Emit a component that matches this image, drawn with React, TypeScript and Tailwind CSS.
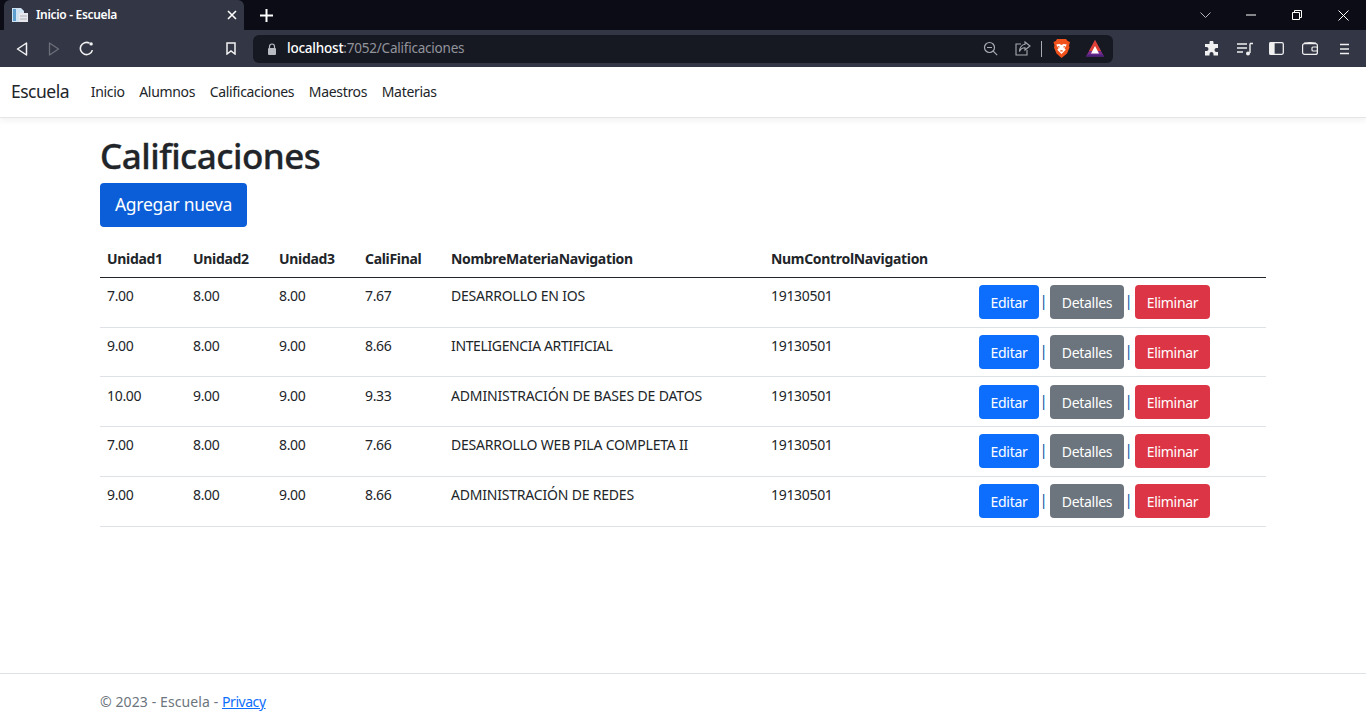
import React from "react";

const F = "font-['Noto_Sans',sans-serif]";

const rows = [
  { h: "h-[50px]", pad: "pt-[7px]", t: "tracking-[-0.2px]", c: ["7.00", "8.00", "8.00", "7.67"], n: "DESARROLLO EN IOS" },
  { h: "h-[49px]", pad: "pt-[7px]", t: "tracking-[-0.37px]", c: ["9.00", "8.00", "9.00", "8.66"], n: "INTELIGENCIA ARTIFICIAL" },
  { h: "h-[50px]", pad: "pt-[8px]", t: "tracking-[-0.15px]", c: ["10.00", "9.00", "9.00", "9.33"], n: "ADMINISTRACIÓN DE BASES DE DATOS" },
  { h: "h-[50px]", pad: "pt-[7px]", t: "tracking-[-0.2px]", c: ["7.00", "8.00", "8.00", "7.66"], n: "DESARROLLO WEB PILA COMPLETA II" },
  { h: "h-[50px]", pad: "pt-[7px]", t: "tracking-[-0.2px]", c: ["9.00", "8.00", "9.00", "8.66"], n: "ADMINISTRACIÓN DE REDES" },
];

function TabBar() {
  return (
    <div className="flex h-[30px] bg-[#0b0c15] text-white">
      <div className="ml-1 flex h-[30px] w-[240px] items-center rounded-t-md bg-[#333645] pl-2 pr-2">
        <svg width="16" height="16" viewBox="0 0 16 16" className="shrink-0">
          <path d="M0 1h9l3 3v11H0z" fill="#cfe3f3" />
          <path d="M1 2h3v12H1z" fill="#5f9fd0" />
          <path d="M7 6h9v9H7z" fill="#e8e8ec" />
          <path d="M8 9h7M8 12h7" stroke="#a9b0bb" />
        </svg>
        <span className="ml-[8px] flex-1 text-[12px] font-semibold leading-none tracking-[-0.32px]">Inicio - Escuela</span>
        <svg width="10" height="10" viewBox="0 0 10 10" stroke="#fff" strokeWidth="1.6" className="-mr-[1px]">
          <path d="M1 1l8 8M9 1l-8 8" />
        </svg>
      </div>
      <svg width="13" height="13" viewBox="0 0 13 13" stroke="#fff" strokeWidth="2" className="ml-[16px] mt-[9px]">
        <path d="M6.5 0v13M0 6.5h13" />
      </svg>
      <div className="ml-auto flex items-center text-[#e6e6e6]">
        <svg width="11" height="7" viewBox="0 0 11 7" fill="none" stroke="#b5b5bb" className="mr-[35px]">
          <path d="M.5.5l5 5 5-5" />
        </svg>
        <svg width="10" height="2" viewBox="0 0 10 2" className="mr-[36px]">
          <path d="M0 1h10" stroke="#fff" />
        </svg>
        <svg width="10" height="10" viewBox="0 0 10 10" fill="none" stroke="#fff" className="mr-[36px]">
          <path d="M.5 2.5h7v7h-7zM2.5 2.5v-2h7v7h-2" />
        </svg>
        <svg width="11" height="11" viewBox="0 0 11 11" stroke="#fff" className="mr-[17px]">
          <path d="M.5.5l10 10M10.5.5l-10 10" />
        </svg>
      </div>
    </div>
  );
}

function ToolBar() {
  return (
    <div className="flex h-[37px] items-center bg-[#333645]">
      <svg width="12" height="14" viewBox="0 0 12 14" fill="none" stroke="#f2f2f2" strokeWidth="1.5" className="ml-[16px]">
        <path d="M10.5 1L1.5 7l9 6z" strokeLinejoin="round" />
      </svg>
      <svg width="12" height="14" viewBox="0 0 12 14" fill="none" stroke="#6c6e7a" strokeWidth="1.3" className="ml-[20px]">
        <path d="M1.5 1l9 6-9 6z" strokeLinejoin="round" />
      </svg>
      <svg width="15" height="15" viewBox="0 0 14 14" fill="none" stroke="#f2f2f2" strokeWidth="1.5" className="ml-[19px]">
        <path d="M12.5 8.5A5.7 5.7 0 1 1 9.8 2" />
        <circle cx="11.3" cy="2.7" r="1.6" fill="#f2f2f2" stroke="none" />
      </svg>
      <svg width="10" height="13" viewBox="0 0 10 13" fill="none" stroke="#f2f2f2" strokeWidth="1.5" className="ml-[132px]">
        <path d="M1 1h8v11L5 9l-4 3z" />
      </svg>
      <div className="ml-[17px] flex h-[28px] w-[860px] items-center rounded-md bg-[#171922]">
        <svg width="10" height="12" viewBox="0 0 10 12" className="ml-[14px]">
          <path d="M2.5 5V3.5a2.5 2.5 0 0 1 5 0V5" fill="none" stroke="#b9bbc2" strokeWidth="1.2" />
          <rect x="1" y="5" width="8" height="7" rx="1" fill="#b9bbc2" />
        </svg>
        <span className={`ml-[10px] text-[13.5px] leading-none tracking-[-0.22px] ${F}`}>
          <span className="font-medium text-white">localhost</span>
          <span className="text-[#92949c]">:7052/Calificaciones</span>
        </span>
        <svg width="15" height="15" viewBox="0 0 15 15" fill="none" stroke="#a9abb2" strokeWidth="1.2" className="ml-auto mr-[1px]">
          <circle cx="6.5" cy="6.5" r="5" />
          <path d="M4 6.5h5M10.2 10.2l4 4" />
        </svg>
        <svg width="16" height="15" viewBox="0 0 16 15" fill="none" stroke="#a9abb2" strokeWidth="1.1" className="ml-[16px]">
          <path d="M6 3H1v11h11V9" />
          <path d="M10 1l5 4-5 4V6.800C7.500 6.800 5.500 8 4.500 10.500 4.500 6.500 7 3.500 10 3.300z" />
        </svg>
        <div className="ml-[10px] h-[16px] w-px bg-[#a9abb2]" />
        <svg width="17" height="19" viewBox="0 0 17 19" className="ml-[11px]">
          <path d="M4 0h9l1.700 2 2.300 1-1 3.500.5 2-2.500 6L8.500 19 3.500 14.500 1 8.500l.5-2L.5 3l2.300-1z" fill="#f1511b" />
          <path d="M3.200 5.500L6.500 5 8.500 5.900 10.500 5l3.300.5L11.500 9.500l1.300 1.200L9.500 14 8.500 15 7.500 14 4.200 10.700l1.300-1.200z" fill="#fff" />
          <path d="M6.500 8.300L5 7.500M10.500 8.300L12 7.500M7.300 11.800h2.400" stroke="#f1511b" strokeWidth="1.200" />
        </svg>
        <svg width="18" height="17" viewBox="0 0 18 17" className="ml-[16px]">
          <path d="M9 0L18 16.500H0z" fill="#7c2d8c" />
          <path d="M9 0L3 11h12z" fill="#e8432a" opacity=".9" />
          <path d="M0 16.500h18l-2-2H2z" fill="#4a2080" />
          <path d="M9 6l4 7.500H5z" fill="#fff" />
        </svg>
        <div className="w-[9px]" />
      </div>
      <svg width="15" height="15" viewBox="0 0 15 15" className="ml-[91px]" fill="#f0f0f0">
        <path d="M5.500 1.500a2 2 0 0 1 4 0V3H14v4h-1.500a2 2 0 0 0 0 4H14v3.500H9.500V13a2 2 0 0 0-4 0v1.500H1V10h1.500a2 2 0 0 0 0-4H1V3h4.500z" />
      </svg>
      <svg width="16" height="14" viewBox="0 0 16 14" className="ml-[18px]" fill="none" stroke="#f0f0f0" strokeWidth="1.400">
        <path d="M0 2h10M0 6h10M0 10h6" />
        <path d="M13 1.500h3M13 1.500V11" />
        <circle cx="11" cy="11.500" r="2" fill="#f0f0f0" stroke="none" />
      </svg>
      <svg width="15" height="13" viewBox="0 0 15 13" className="ml-[16px]" fill="none" stroke="#f0f0f0" strokeWidth="1.300">
        <rect x=".7" y=".7" width="13.600" height="11.600" rx="1.500" />
        <path d="M1 1h4v11H1z" fill="#f0f0f0" />
      </svg>
      <svg width="16" height="13" viewBox="0 0 16 13" className="ml-[18px]" fill="none" stroke="#f0f0f0" strokeWidth="1.200">
        <rect x=".6" y="1.600" width="14.800" height="10.800" rx="2" />
        <path d="M2 1C6 .5 10 .5 14 1" />
        <rect x="10" y="5" width="5.500" height="4" rx="1" />
      </svg>
      <svg width="11" height="12" viewBox="0 0 11 12" className="ml-[21px]" stroke="#f0f0f0" strokeWidth="1.500">
        <path d="M1 1.500h9M1 6h9M1 10.500h9" />
      </svg>
    </div>
  );
}

function Btn({ label, color }: { label: string; color: string }) {
  return <a className={`inline-flex h-[34.500px] items-center justify-center rounded-[4px] pt-[1px] ${color}`}>{label}</a>;
}

function Pipe() {
  return <span className="mt-[5px] mr-[2px] w-[9px] text-center tracking-normal text-[#00509e]">|</span>;
}

export default function App() {
  return (
    <div className={`flex h-[728px] flex-col overflow-hidden bg-white text-[14px] leading-[21px] tracking-[-0.32px] text-[#212529] ${F}`}>
      <TabBar />
      <ToolBar />
      <nav className="flex h-[51px] items-center border-b border-[#e5e5e5] pl-[11px] shadow-[0_3px_6px_rgba(0,0,0,0.05)]">
        <span className="mr-[21.700px] pb-[1px] text-[17.5px] tracking-[-0.5px]">Escuela</span>
        <div className="flex gap-[14.600px] pb-[1px]">
          {["Inicio", "Alumnos", "Calificaciones", "Maestros", "Materias"].map((n) => (
            <a key={n}>{n}</a>
          ))}
        </div>
      </nav>
      <main className="flex-1 px-[100px] pt-[17px]">
        <h1 className="mb-[6px] text-[35px] font-medium leading-[42px] tracking-[-0.5px] [-webkit-text-stroke:0.35px_#212529]">Calificaciones</h1>
        <a className="inline-flex h-[44px] w-[147px] items-center justify-center rounded-[4px] bg-[#0b5ed7] pb-[2px] text-[17.5px] tracking-[-0.3px] text-white">
          Agregar nueva
        </a>
        <table className="mt-[14px] w-[1166px] table-fixed border-collapse">
          <colgroup>
            <col className="w-[86px]" />
            <col className="w-[86px]" />
            <col className="w-[86px]" />
            <col className="w-[86px]" />
            <col className="w-[320px]" />
            <col className="w-[208px]" />
            <col />
          </colgroup>
          <thead>
            <tr className="h-[36px] border-b border-[#212529] text-left">
              {["Unidad1", "Unidad2", "Unidad3", "CaliFinal", "NombreMateriaNavigation", "NumControlNavigation", ""].map((h, i) => (
                <th key={i} className="px-[7px] pt-[6px] pb-[8px] align-bottom font-bold">
                  {h}
                </th>
              ))}
            </tr>
          </thead>
          <tbody>
            {rows.map((r, i) => (
              <tr key={i} className={`border-b border-[#dee2e6] ${r.h}`}>
                {r.c.map((c, j) => (
                  <td key={j} className={`px-[7px] align-top ${r.pad}`}>
                    {c}
                  </td>
                ))}
                <td className={`px-[7px] align-top ${r.t} ${r.pad}`}>{r.n}</td>
                <td className={`px-[7px] align-top ${r.pad}`}>19130501</td>
                <td className={`px-[7px] align-top ${r.pad}`}>
                  <div className="flex items-start text-white">
                    <Btn label="Editar" color="w-[60px] bg-[#0d6efd]" />
                    <Pipe />
                    <Btn label="Detalles" color="w-[74px] bg-[#6c757d]" />
                    <Pipe />
                    <Btn label="Eliminar" color="w-[75px] bg-[#dc3545]" />
                  </div>
                </td>
              </tr>
            ))}
          </tbody>
        </table>
      </main>
      <footer className="h-[55px] border-t border-[#dee2e6] px-[100px] pt-[17px] tracking-[0.1px] text-[#6c757d]">
        © 2023 - Escuela - <a className="tracking-[-0.45px] text-[#0d6efd] underline">Privacy</a>
      </footer>
    </div>
  );
}
